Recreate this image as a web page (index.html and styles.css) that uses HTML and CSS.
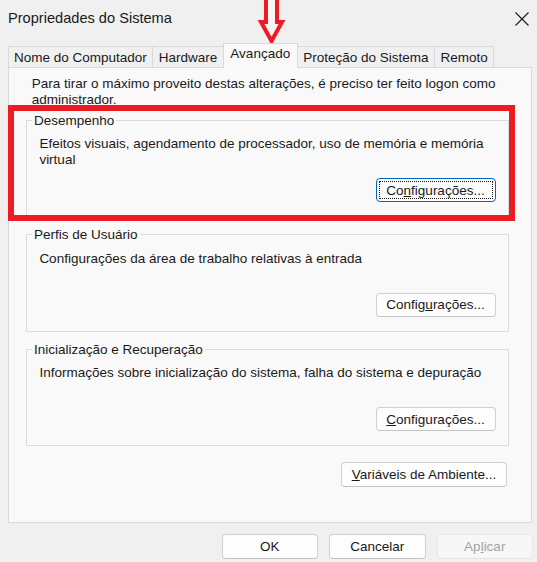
FILE: index.html
```html
<!DOCTYPE html>
<html lang="pt">
<head>
<meta charset="utf-8">
<title>Propriedades do Sistema</title>
<link rel="stylesheet" href="styles.css">
</head>
<body>
<div class="window">
  <div class="titlebar">
    <span class="title">Propriedades do Sistema</span>
    <svg class="close" width="14" height="14" viewBox="0 0 14 14" aria-label="Fechar">
      <path d="M0.5 0.5 L13.5 13.5 M13.5 0.5 L0.5 13.5" stroke="#1a1a1a" stroke-width="1.1" fill="none"/>
    </svg>
  </div>
  <div class="tabs">
    <div class="tab">Nome do Computador</div>
    <div class="tab">Hardware</div>
    <div class="tab active">Avançado</div>
    <div class="tab">Proteção do Sistema</div>
    <div class="tab">Remoto</div>
  </div>
  <div class="panel">
    <p class="intro">Para tirar o máximo proveito destas alterações, é preciso ter feito logon como administrador.</p>
    <fieldset class="group">
      <legend>Desempenho</legend>
      <p class="desc">Efeitos visuais, agendamento de processador, uso de memória e memória virtual</p>
      <div class="row"><button class="btn cfg focused">Co<u>n</u>figurações...</button></div>
    </fieldset>
    <fieldset class="group">
      <legend>Perfis de Usuário</legend>
      <p class="desc">Configurações da área de trabalho relativas à entrada</p>
      <div class="row"><button class="btn cfg">Config<u>u</u>rações...</button></div>
    </fieldset>
    <fieldset class="group">
      <legend>Inicialização e Recuperação</legend>
      <p class="desc">Informações sobre inicialização do sistema, falha do sistema e depuração</p>
      <div class="row"><button class="btn cfg"><u>C</u>onfigurações...</button></div>
    </fieldset>
    <div class="row env-row"><button class="btn env"><u>V</u>ariáveis de Ambiente...</button></div>
  </div>
  <div class="footer">
    <button class="btn dlg">OK</button>
    <button class="btn dlg">Cancelar</button>
    <button class="btn dlg disabled">Ap<u>l</u>icar</button>
  </div>

  <div class="highlight"></div>
  <svg class="arrow" width="32" height="50" viewBox="0 0 32 50">
    <polygon points="10,-4 21,-4 21,22 26,22 15.5,41 5,22 10,22" fill="#f5f5f5" stroke="#ed1c24" stroke-width="4" stroke-linejoin="miter"/>
  </svg>
</div>
</body>
</html>
```

FILE: styles.css
```css
html, body {
  margin: 0;
  padding: 0;
}
body {
  width: 537px;
  height: 562px;
  overflow: hidden;
  background: #f0f0f0;
  font-family: "Liberation Sans", Arial, sans-serif;
  font-size: 13.5px;
  color: #1a1a1a;
}
.window {
  position: relative;
  height: 562px;
}
.titlebar {
  height: 43px;
  box-sizing: border-box;
  padding: 8px 8px 0 8px;
  display: flex;
  justify-content: space-between;
  align-items: flex-start;
}
.title {
  font-size: 14.6px;
  line-height: 20px;
}
.close {
  margin-top: 4px;
}
.tabs {
  height: 24px;
  display: flex;
  align-items: flex-end;
  padding-left: 7.5px;
}
.tab {
  height: 21px;
  box-sizing: border-box;
  border: 1px solid #d9d9d9;
  border-bottom: none;
  padding: 1px 5.5px 0;
  line-height: 19px;
  background: #f0f0f0;
  white-space: nowrap;
}
.tab + .tab {
  margin-left: -1px;
}
.tab.active {
  height: 25px;
  padding: 0 6.5px;
  margin-bottom: -1px;
  background: #f9f9f9;
  position: relative;
  z-index: 1;
}
.panel {
  margin-left: 7.5px;
  width: 524.5px;
  height: 456px;
  box-sizing: border-box;
  border: 1px solid #d9d9d9;
  background: #f9f9f9;
  padding: 7.5px 22.5px 0 17.2px;
}
.intro {
  margin: 0 0 5px 6px;
  line-height: 16px;
}
.group {
  margin: 0 0 10px 0;
  padding: 0 12px 14px 0;
  border: 1px solid #dcdcdc;
  min-width: 0;
}
.group legend {
  margin-left: 5.3px;
  padding: 0 2px;
  line-height: 15px;
}
.desc {
  margin: 8.5px 0 0 12.7px;
  min-height: 42px;
  line-height: 16px;
}
.row {
  display: flex;
  justify-content: flex-end;
}
.btn {
  box-sizing: border-box;
  height: 24px;
  border: 1px solid #d0d0d0;
  border-bottom-color: #c4c4c4;
  border-radius: 4px;
  background: #fdfdfd;
  font-family: inherit;
  font-size: 13.5px;
  color: #1a1a1a;
  padding: 0;
  text-align: center;
}
.cfg {
  width: 120px;
}
.focused {
  border: 1px solid #0067c0;
  outline: 1px dotted #1a1a1a;
  outline-offset: -4px;
}
.env-row {
  margin-top: 0;
  padding-right: 1.5px;
}
.env {
  margin-top: 6px;
  width: 166px;
  height: 25px;
}
.footer {
  display: flex;
  justify-content: flex-end;
  gap: 11px;
  padding: 11px 4px 0 0;
}
.dlg {
  width: 96.5px;
  height: 24.5px;
}
.disabled {
  background: #f7f7f7;
  border-color: #e6e6e6;
  color: #a3a3a3;
}
.highlight {
  position: absolute;
  left: 7.5px;
  top: 105px;
  width: 507.5px;
  height: 116px;
  box-sizing: border-box;
  border: 6px solid #ed1c24;
  pointer-events: none;
}
.arrow {
  position: absolute;
  left: 256px;
  top: 0;
  overflow: visible;
}
```
